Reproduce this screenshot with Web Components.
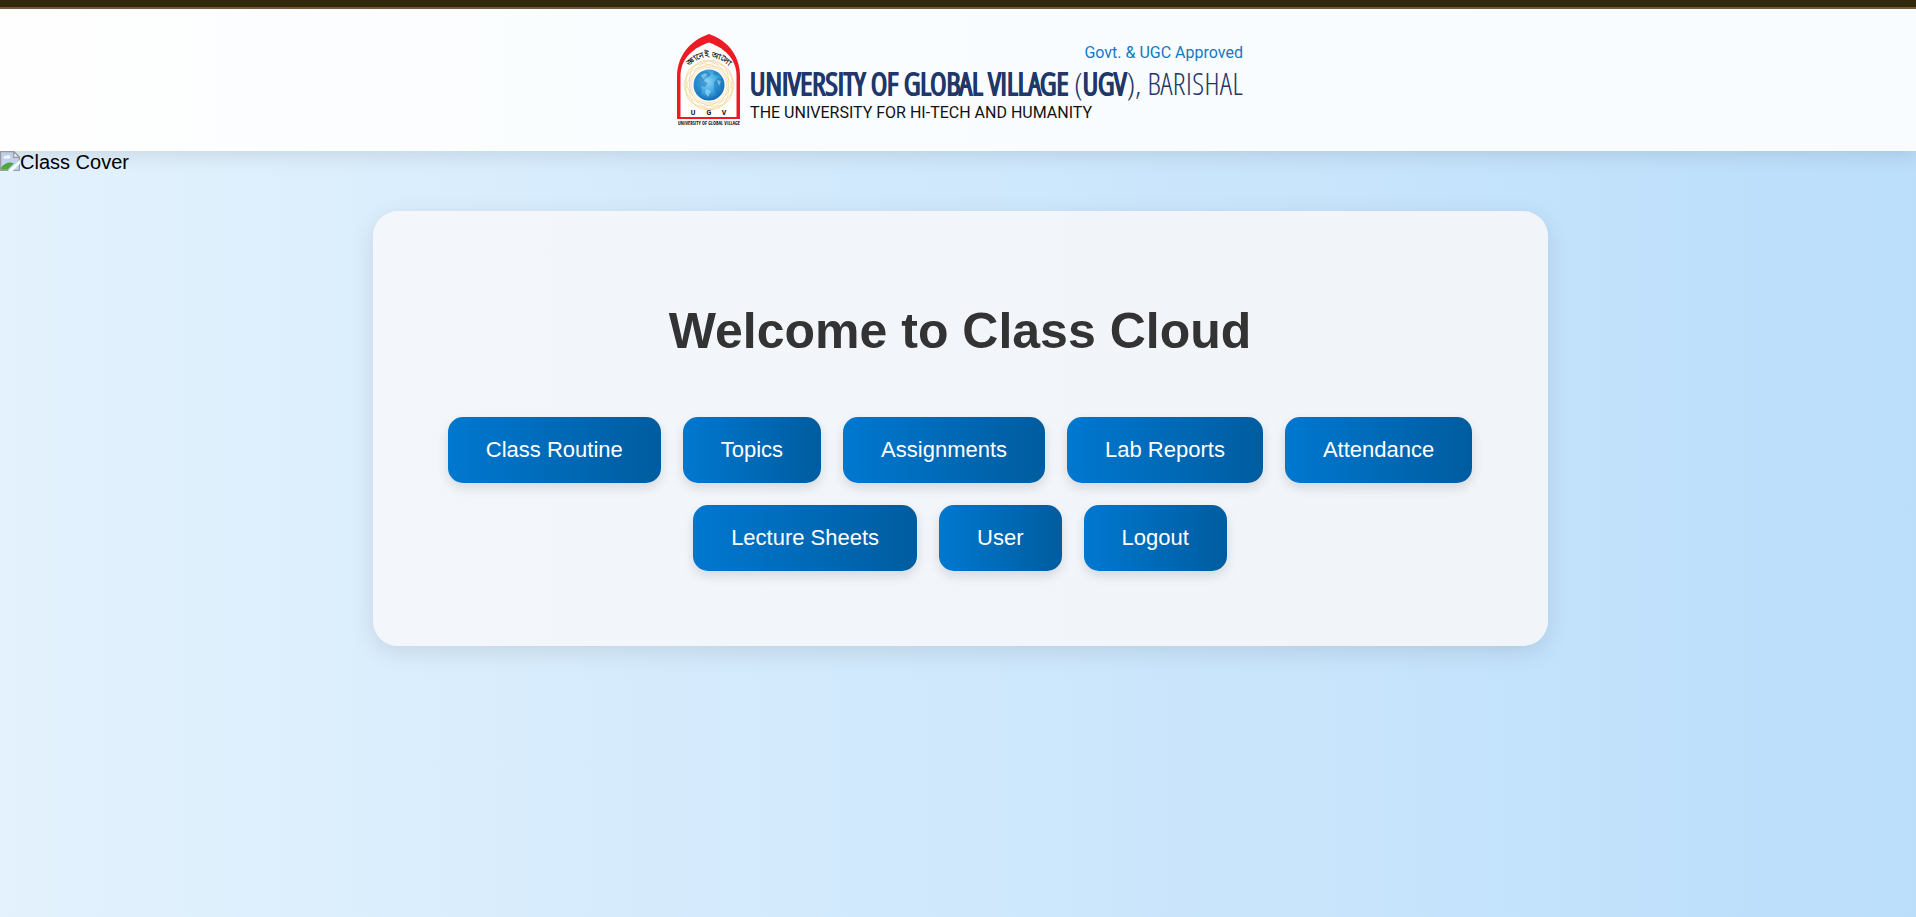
<!DOCTYPE html>
<html lang="en">
<head>
<meta charset="utf-8">
<meta name="viewport" content="width=device-width, initial-scale=1">
<title>Class Cloud</title>
<style>
  html { height: 100%; }
  body {
    margin: 0;
    min-height: 100%;
    font-family: "Liberation Sans", Arial, sans-serif;
    font-size: 20px;
    color: #000;
    background: linear-gradient(90deg, #e3f2fd, #bbdefb);
  }
</style>
</head>
<body>
<class-app></class-app>

<template id="t-app">
  <style>
    :host { display: block; }
    main { padding: 0 20px 48px 24px; }
  </style>
  <site-header></site-header>
  <broken-image label="Class Cover"></broken-image>
  <main>
    <welcome-card heading="Welcome to Class Cloud">
      <nav-button>Class Routine</nav-button>
      <nav-button>Topics</nav-button>
      <nav-button>Assignments</nav-button>
      <nav-button>Lab Reports</nav-button>
      <nav-button>Attendance</nav-button>
      <nav-button>Lecture Sheets</nav-button>
      <nav-button>User</nav-button>
      <nav-button>Logout</nav-button>
    </welcome-card>
  </main>
</template>

<template id="t-header">
  <style>
    :host { display: block; position: relative; }
    header {
      display: flex;
      justify-content: center;
      padding: 24px 20px 23px 24px;
      border-top: 2px solid #715b3b;
      background: linear-gradient(90deg, #fefefe, #f9fdff 40%, #f8fcff);
      box-shadow: 0 5px 19px rgba(0, 0, 0, .1);
    }
    .strip { height: 7px; background: #33290d; }
  </style>
  <div class="strip"></div>
  <header><university-logo></university-logo></header>
</template>

<template id="t-logo">
  <style>
    :host { display: flex; gap: 9px; }
    svg { display: block; width: 64px; height: 95px; overflow: visible; }
    .text { display: flex; flex-direction: column; padding-top: 8px; white-space: nowrap; font-family: Roboto, "Liberation Sans", sans-serif; }
    .ok { align-self: flex-end; font-size: 16px; line-height: 24px; color: #1578c0; }
    .name { font-family: "Open Sans Condensed Light", "Open Sans Condensed", "Roboto Condensed", sans-serif; font-weight: 700; font-size: 31px; line-height: 36px; color: #1f3769; -webkit-text-stroke: 1px #1f3769; }
    .name span { font-weight: 400; -webkit-text-stroke: 0; }
    .motto { font-size: 16px; line-height: 24px; color: #111; }
  </style>
  <svg viewBox="0 0 64 95" aria-hidden="true">
    <defs>
      <radialGradient id="g" cx=".45" cy=".4" r=".6">
        <stop offset="0" stop-color="#8fd6f5"/><stop offset=".6" stop-color="#3aa3df"/><stop offset="1" stop-color="#1169b2"/>
      </radialGradient>
      <path id="arc" d="M12 34 Q32 14 52 34"/>
    </defs>
    <path d="M0 86 V43 C0 24 12 8 32 1 C52 8 63 24 63 43 V86 Z" fill="#ed1c24"/>
    <path d="M3.500 84 V43 C3.500 28 13 16 32 9.500 C50 16 59.500 28 59.500 43 V84 Z" fill="#fff"/>
    <g fill="none" stroke="#f5d79b" stroke-width=".7">
      <circle cx="32" cy="52" r="24"/>
      <ellipse cx="32" cy="52" rx="25" ry="19"/>
      <ellipse cx="32" cy="52" rx="25" ry="19" transform="rotate(36 32 52)"/>
      <ellipse cx="32" cy="52" rx="25" ry="19" transform="rotate(72 32 52)"/>
      <ellipse cx="32" cy="52" rx="25" ry="19" transform="rotate(108 32 52)"/>
      <ellipse cx="32" cy="52" rx="25" ry="19" transform="rotate(144 32 52)"/>
      <circle cx="32" cy="52" r="17.500"/>
    </g>
    <circle cx="32" cy="52" r="15.500" fill="url(#g)"/>
    <path d="M18 46 q2-5 6-7 l6-1 4 3-2 3-4 1-1 3 4 2-3 4-4-1 1 5-2 4q-4-3-5-8z M37 49 l4-4 5 1 1 6-3 7-4 4-3-6z M37 38 l5 2-2 3-4-2z" fill="#1874b8" opacity=".5"/>
    <path d="M24 42 l5-2 1 2-4 4z M40 47 l4 1-2 5z M29 56 l5 2-3 6-3-4z" fill="#a9e0f6" opacity=".6"/>
    <text font-family="sans-serif" font-size="8" font-weight="700" fill="#222" text-anchor="middle"><textPath href="#arc" startOffset="50%">জ্ঞানেই আলো</textPath></text>
    <g font-family="Roboto, sans-serif" font-weight="700" fill="#111" text-anchor="middle">
      <text x="16" y="82" font-size="7">U</text>
      <text x="32" y="82" font-size="7">G</text>
      <text x="47" y="82" font-size="7">V</text>
      <text x="32" y="92" font-size="5" font-family="Open Sans Condensed, Roboto Condensed, sans-serif">UNIVERSITY OF GLOBAL VILLAGE</text>
    </g>
  </svg>
  <div class="text">
    <div class="ok">Govt. &amp; UGC Approved</div>
    <div class="name">UNIVERSITY OF GLOBAL VILLAGE <span>(</span>UGV<span>), BARISHAL</span></div>
    <div class="motto">THE UNIVERSITY FOR HI-TECH AND HUMANITY</div>
  </div>
</template>

<template id="t-image">
  <style>
    :host { display: flex; height: 60px; line-height: 22px; }
    svg { width: 20px; height: 20px; flex: none; }
  </style>
  <svg viewBox="0 0 16 16" aria-hidden="true">
    <path d="M.5 .5 H11 L15.500 5 V15.500 H.5Z" fill="#c5d8f7" stroke="#a0a0a0"/>
    <path d="M11 .5 V5 H15.500Z" fill="#fff" stroke="#a0a0a0"/>
    <path d="M3 6 a1.500 1.500 0 0 1 2-2 a1.500 1.500 0 0 1 3 2Z" fill="#fff"/>
    <path d="M1 15 V13 C4 9.500 8 8 11 10 L6 15Z" fill="#4fa83d"/>
    <path d="M6.500 16 L16 7 V10 L10 16Z" fill="#fff"/>
  </svg>
  <span></span>
</template>

<template id="t-card">
  <style>
    :host { display: block; }
    section {
      box-sizing: border-box;
      max-width: 1175px;
      margin: 0 auto;
      padding: 75px 74px;
      border-radius: 25px;
      background: linear-gradient(90deg, #f3f6fb, #f1f4f9);
      box-shadow: 0 6px 25px rgba(0, 0, 0, .1);
      text-align: center;
    }
    h1 { margin: 14px 0 55px; font-size: 50px; line-height: 62px; color: #333; }
    nav { display: flex; flex-wrap: wrap; justify-content: center; gap: 22px; }
  </style>
  <section>
    <h1></h1>
    <nav><slot></slot></nav>
  </section>
</template>

<template id="t-button">
  <style>
    :host { display: block; }
    button {
      display: block;
      height: 66px;
      padding: 0 38px;
      border: 0;
      border-radius: 15px;
      font: 22px "Liberation Sans", Arial, sans-serif;
      color: #fff;
      background: linear-gradient(90deg, #0078d0, #005c9f);
      box-shadow: 0 5px 12px rgba(0, 0, 0, .12);
      cursor: pointer;
    }
  </style>
  <button type="button"><slot></slot></button>
</template>

<script>
  const define = (name, id, setup) => customElements.define(name, class extends HTMLElement {
    constructor() {
      super();
      this.attachShadow({ mode: "open" })
        .append(document.getElementById(id).content.cloneNode(true));
    }
    connectedCallback() { if (setup) setup(this, this.shadowRoot); }
  });
  define("nav-button", "t-button");
  define("welcome-card", "t-card", (el, root) => {
    root.querySelector("h1").textContent = el.getAttribute("heading");
  });
  define("broken-image", "t-image", (el, root) => {
    root.querySelector("span").textContent = el.getAttribute("label");
  });
  define("university-logo", "t-logo");
  define("site-header", "t-header");
  define("class-app", "t-app");
</script>
</body>
</html>
